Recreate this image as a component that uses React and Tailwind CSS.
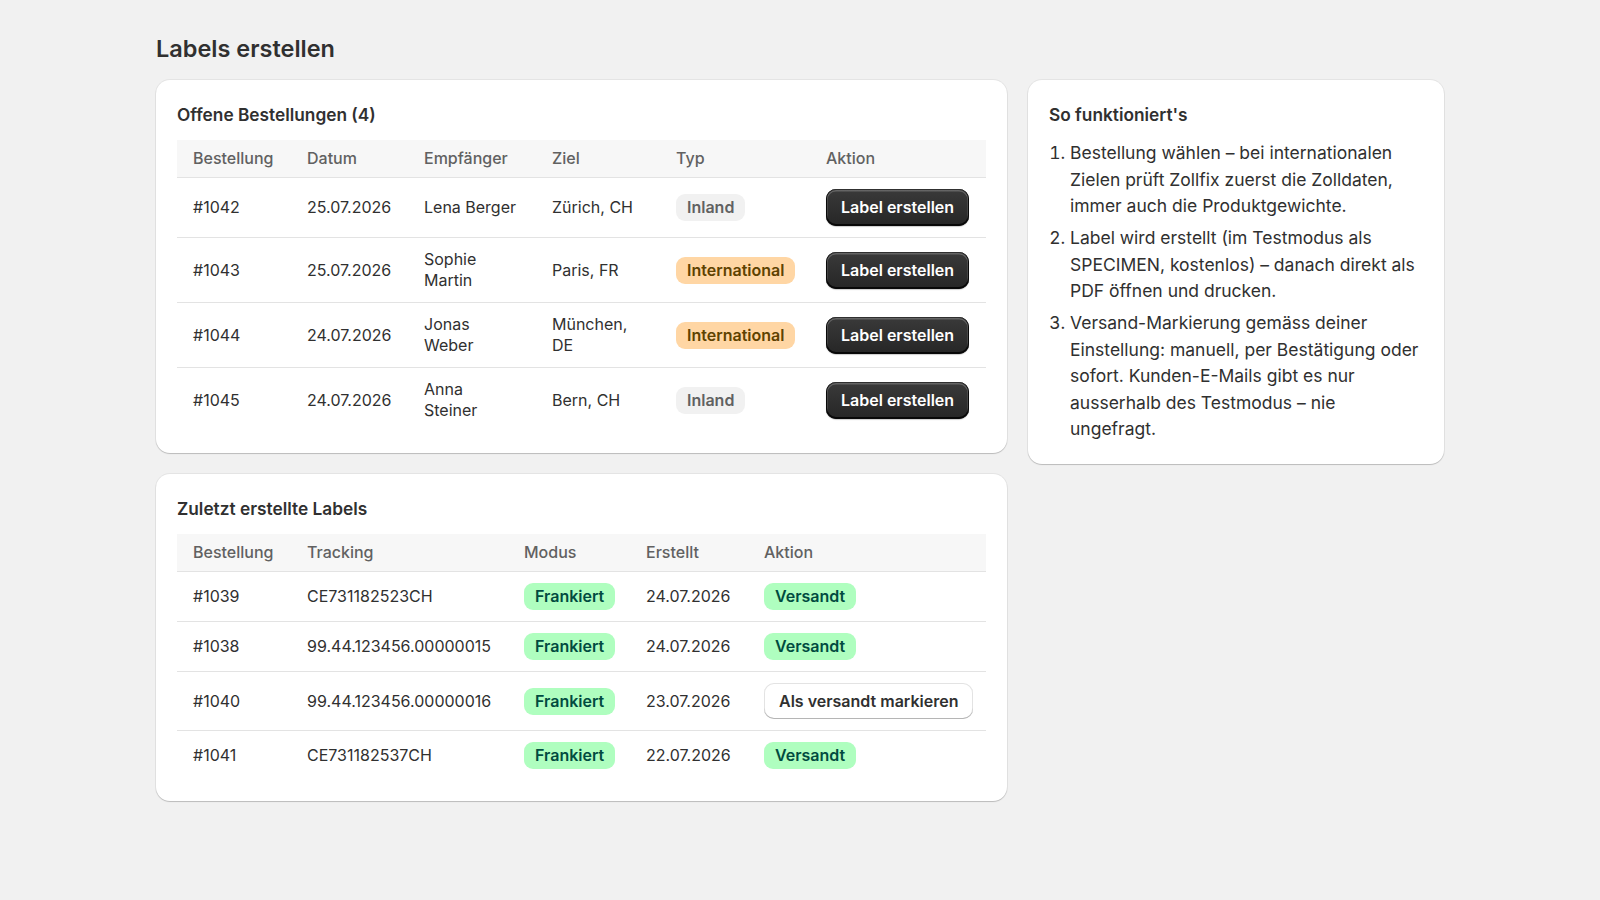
import React from 'react'

const orders = [
  { id: '#1042', date: '25.07.2026', name: 'Lena Berger', dest: 'Zürich, CH', intl: false },
  { id: '#1043', date: '25.07.2026', name: 'Sophie Martin', dest: 'Paris, FR', intl: true },
  { id: '#1044', date: '24.07.2026', name: 'Jonas Weber', dest: 'München, DE', intl: true },
  { id: '#1045', date: '24.07.2026', name: 'Anna Steiner', dest: 'Bern, CH', intl: false },
]

const labels = [
  { id: '#1039', tracking: 'CE731182523CH', created: '24.07.2026', shipped: true },
  { id: '#1038', tracking: '99.44.123456.00000015', created: '24.07.2026', shipped: true },
  { id: '#1040', tracking: '99.44.123456.00000016', created: '23.07.2026', shipped: false },
  { id: '#1041', tracking: 'CE731182537CH', created: '22.07.2026', shipped: true },
]

function Card({ title, children, className = '' }) {
  return (
    <div className={`bg-white rounded-[14px] shadow-[0_1px_1px_rgba(0,0,0,0.18),0_0_0_1px_rgba(0,0,0,0.05)] px-[21px] pt-[23px] pb-[21px] ${className}`}>
      <h2 className="text-[17.3px] leading-[24px] font-semibold text-[#303030] mb-[13px]">{title}</h2>
      {children}
    </div>
  )
}

function Badge({ tone, children }) {
  const tones = {
    neutral: 'bg-[#f1f1f1] text-[#616161]',
    warning: 'bg-[#ffd6a4] text-[#5e4200]',
    success: 'bg-[#affebf] text-[#014b40]',
  }
  return (
    <span className={`inline-flex items-center h-[27px] px-[11px] rounded-[9px] font-semibold whitespace-nowrap ${tones[tone]}`}>
      {children}
    </span>
  )
}

const th = 'text-left font-medium text-[#616161] px-4 py-2 leading-[21px]'
const td = 'px-4 py-[11px] align-middle leading-[21px]'

export default function App() {
  return (
    <div className="min-h-screen bg-[#f1f1f1] text-[#303030] text-[16px]" style={{ fontFamily: 'Inter, "Noto Sans", sans-serif' }}>
      <div className="max-w-[1288px] mx-auto pt-[33px] pb-10">
        <h1 className="text-[23.5px] leading-[32px] font-semibold mb-[15px]">Labels erstellen</h1>
        <div className="grid grid-cols-[851px_1fr] gap-[21px] items-start">
          <div className="flex flex-col gap-[21px]">
            <Card title="Offene Bestellungen (4)">
              <table className="w-full table-fixed border-collapse">
                <colgroup>
                  <col className="w-[114px]" />
                  <col className="w-[117px]" />
                  <col className="w-[128px]" />
                  <col className="w-[124px]" />
                  <col className="w-[150px]" />
                  <col />
                </colgroup>
                <thead>
                  <tr className="bg-[#f7f7f7] border-b border-[#e3e3e3]">
                    <th className={th}>Bestellung</th>
                    <th className={th}>Datum</th>
                    <th className={th}>Empfänger</th>
                    <th className={th}>Ziel</th>
                    <th className={th}>Typ</th>
                    <th className={th}>Aktion</th>
                  </tr>
                </thead>
                <tbody>
                  {orders.map((o, i) => (
                    <tr key={o.id} className={i < orders.length - 1 ? 'border-b border-[#e3e3e3]' : ''}>
                      <td className={td}>{o.id}</td>
                      <td className={td}>{o.date}</td>
                      <td className={td}>{o.name}</td>
                      <td className={td}>{o.dest}</td>
                      <td className={td}>
                        {o.intl ? <Badge tone="warning">International</Badge> : <Badge tone="neutral">Inland</Badge>}
                      </td>
                      <td className={td}>
                        <button className="h-[37px] px-[15px] rounded-[10px] whitespace-nowrap bg-gradient-to-b from-[#3a3a3a] to-[#262626] text-white font-semibold shadow-[inset_0_-1px_0_1px_rgba(0,0,0,0.8),inset_0_0_0_1px_#303030,inset_0_1px_0_1.5px_rgba(255,255,255,0.22),0_1px_1px_rgba(0,0,0,0.2)]">
                          Label erstellen
                        </button>
                      </td>
                    </tr>
                  ))}
                </tbody>
              </table>
            </Card>

            <Card title="Zuletzt erstellte Labels">
              <table className="w-full table-fixed border-collapse">
                <colgroup>
                  <col className="w-[114px]" />
                  <col className="w-[217px]" />
                  <col className="w-[122px]" />
                  <col className="w-[118px]" />
                  <col />
                </colgroup>
                <thead>
                  <tr className="bg-[#f7f7f7] border-b border-[#e3e3e3]">
                    <th className={th}>Bestellung</th>
                    <th className={th}>Tracking</th>
                    <th className={th}>Modus</th>
                    <th className={th}>Erstellt</th>
                    <th className={th}>Aktion</th>
                  </tr>
                </thead>
                <tbody>
                  {labels.map((l, i) => (
                    <tr key={l.id} className={i < labels.length - 1 ? 'border-b border-[#e3e3e3]' : ''}>
                      <td className={td}>{l.id}</td>
                      <td className={td}>{l.tracking}</td>
                      <td className={td}><Badge tone="success">Frankiert</Badge></td>
                      <td className={td}>{l.created}</td>
                      <td className={td}>
                        {l.shipped ? (
                          <Badge tone="success">Versandt</Badge>
                        ) : (
                          <button className="h-[36px] px-[15px] rounded-[10px] whitespace-nowrap bg-white text-[#303030] font-semibold shadow-[inset_0_-1px_0_0_#b5b5b5,inset_0_0_0_1px_#e3e3e3]">
                            Als versandt markieren
                          </button>
                        )}
                      </td>
                    </tr>
                  ))}
                </tbody>
              </table>
            </Card>
          </div>

          <Card title="So funktioniert's">
            <ol className="list-decimal pl-[21px] text-[17.5px] leading-[26.5px] flex flex-col gap-[5.5px]">
              <li>Bestellung wählen – bei internationalen Zielen prüft Zollfix zuerst die Zolldaten, immer auch die Produktgewichte.</li>
              <li>Label wird erstellt (im Testmodus als SPECIMEN, kostenlos) – danach direkt als PDF öffnen und drucken.</li>
              <li>Versand-Markierung gemäss deiner Einstellung: manuell, per Bestätigung oder sofort. Kunden-E-Mails gibt es nur ausserhalb des Testmodus – nie ungefragt.</li>
            </ol>
          </Card>
        </div>
      </div>
    </div>
  )
}
